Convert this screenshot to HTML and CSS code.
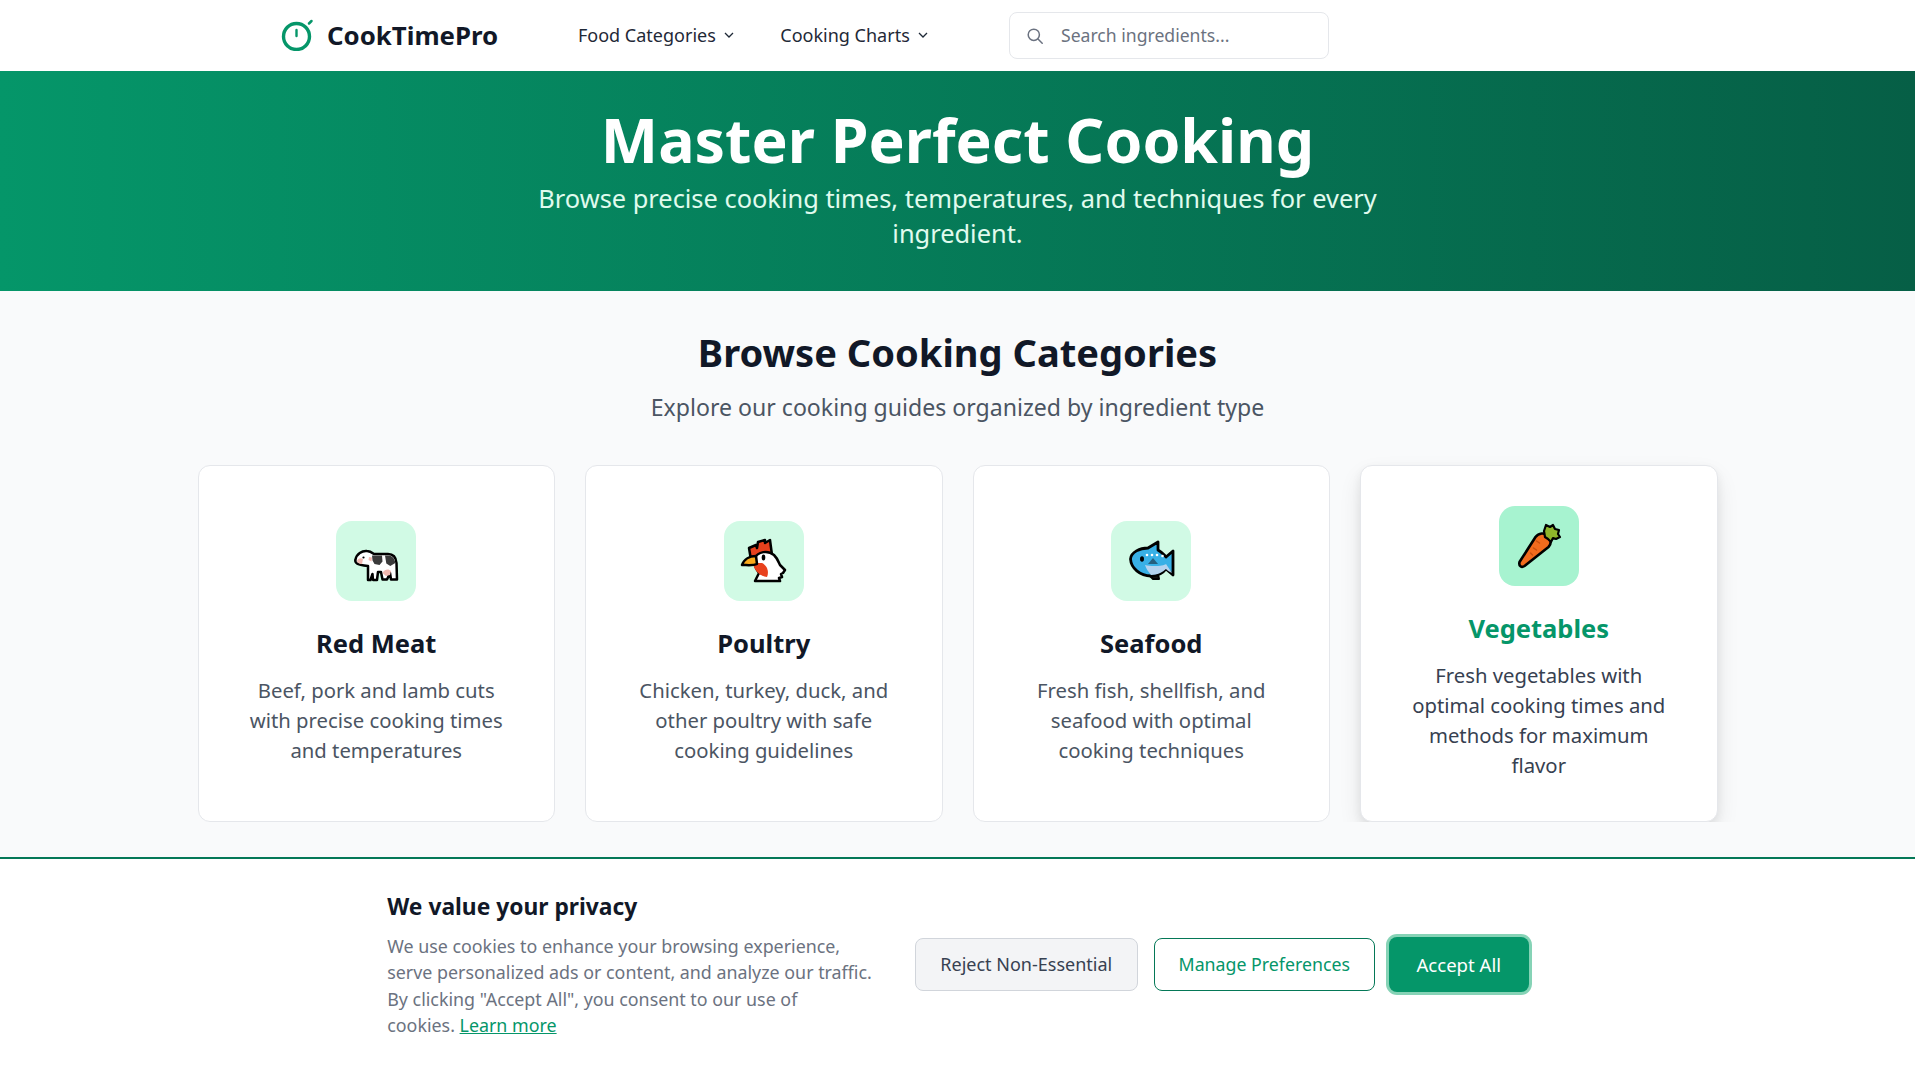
FILE: index.html
```html
<!DOCTYPE html>
<html lang="en">
<head>
  <meta charset="UTF-8" />
  <title>CookTimePro</title>
  <link rel="stylesheet" href="styles.css">
</head>
<body>
  <header class="topbar">
    <a class="logo" href="#">
      <svg class="logo-icon" viewBox="0 0 34 32" fill="none" stroke="#059669" stroke-width="3.4" stroke-linecap="round">
        <circle cx="15.500" cy="17.500" r="13"/>
        <path d="M15.500 11v6" stroke-width="2.400"/>
        <path d="M28 4.500l2.500-2.500" stroke-width="2.500"/>
      </svg>
      <span>CookTimePro</span>
    </a>
    <nav class="nav">
      <a href="#">Food Categories
        <svg class="chevron" viewBox="0 0 10 6" fill="none" stroke="#1f2937" stroke-width="1.3"><path d="M1 1l4 4 4-4"/></svg>
      </a>
      <a href="#">Cooking Charts
        <svg class="chevron" viewBox="0 0 10 6" fill="none" stroke="#1f2937" stroke-width="1.3"><path d="M1 1l4 4 4-4"/></svg>
      </a>
    </nav>
    <label class="search">
      <svg class="search-icon" viewBox="0 0 16 16" fill="none" stroke="#6b7280" stroke-width="1.5" stroke-linecap="round"><circle cx="6.8" cy="6.8" r="5.6"/><path d="M11 11l4.2 4.2"/></svg>
      <input type="text" placeholder="Search ingredients...">
    </label>
  </header>

  <section class="hero">
    <h1>Master Perfect Cooking</h1>
    <p>Browse precise cooking times, temperatures, and techniques for every ingredient.</p>
  </section>

  <main class="categories">
    <h2>Browse Cooking Categories</h2>
    <p class="lead">Explore our cooking guides organized by ingredient type</p>
    <div class="card-grid">
      <a class="card" href="#">
        <div class="card-icon">
          <svg viewBox="0 0 80 80" stroke-linejoin="round" stroke-linecap="round">
            <path fill="#fff" stroke="#000" stroke-width="2.500" d="M19.500 38.500C20.500 33 26 29.500 31 30c3 0 5 1.500 7 3h14c5 0 8 3 8.500 9l.5 16.500h-6l-1-6.500-3 6.500h-4.500L45 51h-3l-1 8h-4l-.5-6-2 6H32V45c-5-.5-9-1-11-2.500-1.500-1-2-2.500-1.500-4z"/>
            <path fill="#3a3a3a" d="M36 34.500h10l.5 6-3 3.500-5-1-2-3.500zM49 34.500h3c4 0 7 3 7.300 7.500l-5 3-4-2.500z"/>
            <path fill="#f2b8b0" d="M21 40c1-3 4-3.500 6-2l-1 5c-2 0-5-1-5-3zM33 36l3 .5-.5 4-3-1.500zM46.500 52c1.500-3.500 6-5 8.500-2l-1 4-4 1z"/>
            <circle cx="27.500" cy="36.500" r="1.100"/>
          </svg>
        </div>
        <h3>Red Meat</h3>
        <p>Beef, pork and lamb cuts with precise cooking times and temperatures</p>
      </a>
      <a class="card" href="#">
        <div class="card-icon">
          <svg viewBox="0 0 80 80" stroke-linejoin="round" stroke-linecap="round">
            <path fill="#e8411d" stroke="#000" stroke-width="2.500" d="M27 39l-2-12 7-3 1 3 1-6 7-2 0 3 5-3 2 15z"/>
            <path fill="#fff" stroke="#000" stroke-width="2.500" d="M30 38c4-8 14-9 20-4 4 4 5 8 6 10l5 5-2 3-2 1 1 3-3 1 1 3H31l4-8c-3-4-5-8-5-14z"/>
            <path fill="#e8411d" d="M29 42h9c6 3 7 10 5 14-7-1-13-6-14-14z"/>
            <path fill="#f9a91c" stroke="#000" stroke-width="2.500" d="M32 35c-6 0-12 3-14 9 5 0 11 1 15-1z"/>
            <ellipse cx="39.500" cy="36.500" rx="1.800" ry="3"/>
          </svg>
        </div>
        <h3>Poultry</h3>
        <p>Chicken, turkey, duck, and other poultry with safe cooking guidelines</p>
      </a>
      <a class="card" href="#">
        <div class="card-icon">
          <svg viewBox="0 0 80 80" stroke-linejoin="round" stroke-linecap="round">
            <path fill="#111" stroke="#000" stroke-width="2" d="M38 54l4 4 6 0-1-5z"/>
            <path fill="#38b0e6" stroke="#000" stroke-width="2.800" d="M19.500 38C20 31 29 27 37 27l10-6v8c3 2 6 4 8 7l7-6v24l-7-6c-3 4-9 7-15 7-11 0-20-8-20.500-17z"/>
            <path fill="#b4d3ef" d="M34 44c7 2 19 1 21-1l6 9c-3-1-5-3-6-4-3 3-9 6-15 6-2-3-5-6-6-10z"/>
            <path fill="#25607f" d="M42 37l5 6h-10z"/>
            <ellipse cx="31" cy="38" rx="2" ry="2.800"/>
            <g fill="#fff"><circle cx="36" cy="34" r="1.300"/><circle cx="41" cy="34" r="1.300"/><circle cx="46" cy="34" r="1.300"/><circle cx="51.500" cy="35" r="1.300"/></g>
          </svg>
        </div>
        <h3>Seafood</h3>
        <p>Fresh fish, shellfish, and seafood with optimal cooking techniques</p>
      </a>
      <a class="card card-active" href="#">
        <div class="card-icon">
          <svg viewBox="0 0 80 80" stroke-linejoin="round" stroke-linecap="round">
            <path fill="#f26b1d" stroke="#000" stroke-width="2.600" d="M20.500 56l16-25c3-4 9-5 13-1 3 3 3 8 0 11l-24 19c-3 2-6 0-5-4z"/>
            <path fill="#8fb62a" stroke="#000" stroke-width="2.200" d="M46 31l-1-6 2-6 4 2 3-2 2 4 4 1-1 4 2 3-4 2-3-1-2 4-3-3z"/>
            <path fill="none" stroke="#c9500f" stroke-width="1.500" d="M37.500 35l3 2M34.500 42l3 2M31.500 47l2 2"/>
          </svg>
        </div>
        <h3>Vegetables</h3>
        <p>Fresh vegetables with optimal cooking times and methods for maximum flavor</p>
      </a>
    </div>
  </main>

  <aside class="cookie-banner">
    <div class="cookie-text">
      <h4>We value your privacy</h4>
      <p>We use cookies to enhance your browsing experience, serve personalized ads or content, and analyze our traffic. By clicking "Accept All", you consent to our use of<br>cookies. <a href="#">Learn more</a></p>
    </div>
    <div class="cookie-actions">
      <button class="btn btn-reject">Reject Non-Essential</button>
      <button class="btn btn-manage">Manage Preferences</button>
      <button class="btn btn-accept">Accept All</button>
    </div>
  </aside>
</body>
</html>
```

FILE: styles.css
```css
* {
  box-sizing: border-box;
}
body {
  margin: 0;
  font-family: "Noto Sans", "Open Sans", sans-serif;
  background: #f9fafb;
  color: #111827;
  overflow: hidden;
}
a {
  color: inherit;
  text-decoration: none;
}

.topbar {
  height: 71px;
  background: #fff;
  display: flex;
  align-items: center;
  padding-left: 281px;
}
.logo {
  display: flex;
  align-items: center;
  gap: 12px;
  font-size: 25.800px;
  font-weight: 700;
  color: #111827;
  width: 297px;
  padding-bottom: 2px;
}
.logo-icon {
  width: 34px;
  height: 32px;
}
.nav {
  display: flex;
  gap: 46.500px;
  width: 431px;
  font-size: 18px;
  color: #1f2937;
  padding-bottom: 2px;
}
.nav a {
  display: flex;
  align-items: center;
  gap: 8px;
}
.chevron {
  width: 10px;
  height: 6px;
}
.search {
  width: 320px;
  height: 47px;
  display: flex;
  align-items: center;
  gap: 16px;
  padding-left: 17px;
  border: 1px solid #e5e7eb;
  border-radius: 8px;
  background: #fff;
}
.search-icon {
  width: 16px;
  height: 16px;
  flex: none;
}
.search input {
  border: none;
  outline: none;
  font: inherit;
  font-size: 17.600px;
  width: 240px;
  background: transparent;
  padding-bottom: 2px;
}
.search input::placeholder {
  color: #6b7280;
  opacity: 1;
}

.hero {
  height: 220px;
  background: linear-gradient(90deg, #059669, #065f46);
  color: #fff;
  text-align: center;
  padding-top: 29px;
}
.hero h1 {
  margin: 0 0 1px;
  font-size: 60.800px;
  line-height: 80px;
  font-weight: 700;
}
.hero p {
  margin: 0 auto;
  max-width: 896px;
  font-size: 25.400px;
  line-height: 35px;
  color: #e0fbee;
}

.categories {
  padding: 35px 197.500px 0;
  text-align: center;
}
.categories h2 {
  margin: 0;
  font-size: 38.100px;
  line-height: 52px;
  font-weight: 700;
}
.lead {
  margin: 13px 0 0;
  font-size: 23.100px;
  line-height: 32px;
  color: #4b5563;
}
.card-grid {
  display: grid;
  grid-template-columns: repeat(4, 1fr);
  gap: 30px;
  margin-top: 42px;
}
.card {
  height: 357px;
  background: #fff;
  border: 1px solid #e5e7eb;
  border-radius: 12px;
  padding: 40px 40px 42px;
  display: flex;
  flex-direction: column;
  align-items: center;
  justify-content: center;
}
.card-icon {
  width: 80px;
  height: 80px;
  border-radius: 16px;
  background: #d1fae5;
  margin-bottom: 24px;
  flex: none;
}
.card-icon svg {
  display: block;
  width: 80px;
  height: 80px;
}
.card h3 {
  margin: 0 0 14px;
  font-size: 25.500px;
  line-height: 36px;
  font-weight: 700;
  color: #111827;
}
.card p {
  margin: 0;
  font-size: 20.300px;
  line-height: 30px;
  color: #4b5563;
}
.card-active {
  box-shadow: 0 10px 25px -3px rgba(0, 0, 0, 0.12), 0 4px 10px rgba(0, 0, 0, 0.06);
}
.card-active .card-icon {
  background: #a7f3d0;
}
.card-active h3 {
  color: #059669;
}
.card-active p {
  color: #374151;
}

/* sits over the page, stuck to the bottom of the window */
.cookie-banner {
  position: fixed;
  left: 0;
  right: 0;
  bottom: 0;
  height: 212px;
  padding-left: 1px;
  background: #fff;
  border-top: 2px solid #047857;
  display: flex;
  align-items: center;
  justify-content: center;
  gap: 31.500px;
}
.cookie-text {
  width: 496px;
  padding-top: 1px;
}
.cookie-text h4 {
  margin: 0 0 10px;
  font-size: 22.800px;
  line-height: 32px;
  font-weight: 700;
  color: #111827;
}
.cookie-text p {
  margin: 0;
  font-size: 17.850px;
  line-height: 26.500px;
  color: #6b7280;
}
.cookie-text a {
  color: #059669;
  text-decoration: underline;
}
.cookie-actions {
  display: flex;
  align-items: center;
  gap: 16px;
}
.btn {
  height: 53px;
  border-radius: 8px;
  font: inherit;
  font-size: 18px;
  white-space: nowrap;
}
.btn-reject {
  width: 223px;
  background: #f3f4f6;
  border: 1px solid #d1d5db;
  color: #374151;
}
.btn-manage {
  width: 221px;
  font-size: 17.750px;
  background: #fff;
  border: 1.5px solid #047857;
  color: #059669;
}
.btn-accept {
  width: 140px;
  height: 55px;
  margin-left: -2px;
  font-size: 18.600px;
  background: #059669;
  border: none;
  color: #fff;
  box-shadow: 0 0 0 3px #86d3b6;
}
```
